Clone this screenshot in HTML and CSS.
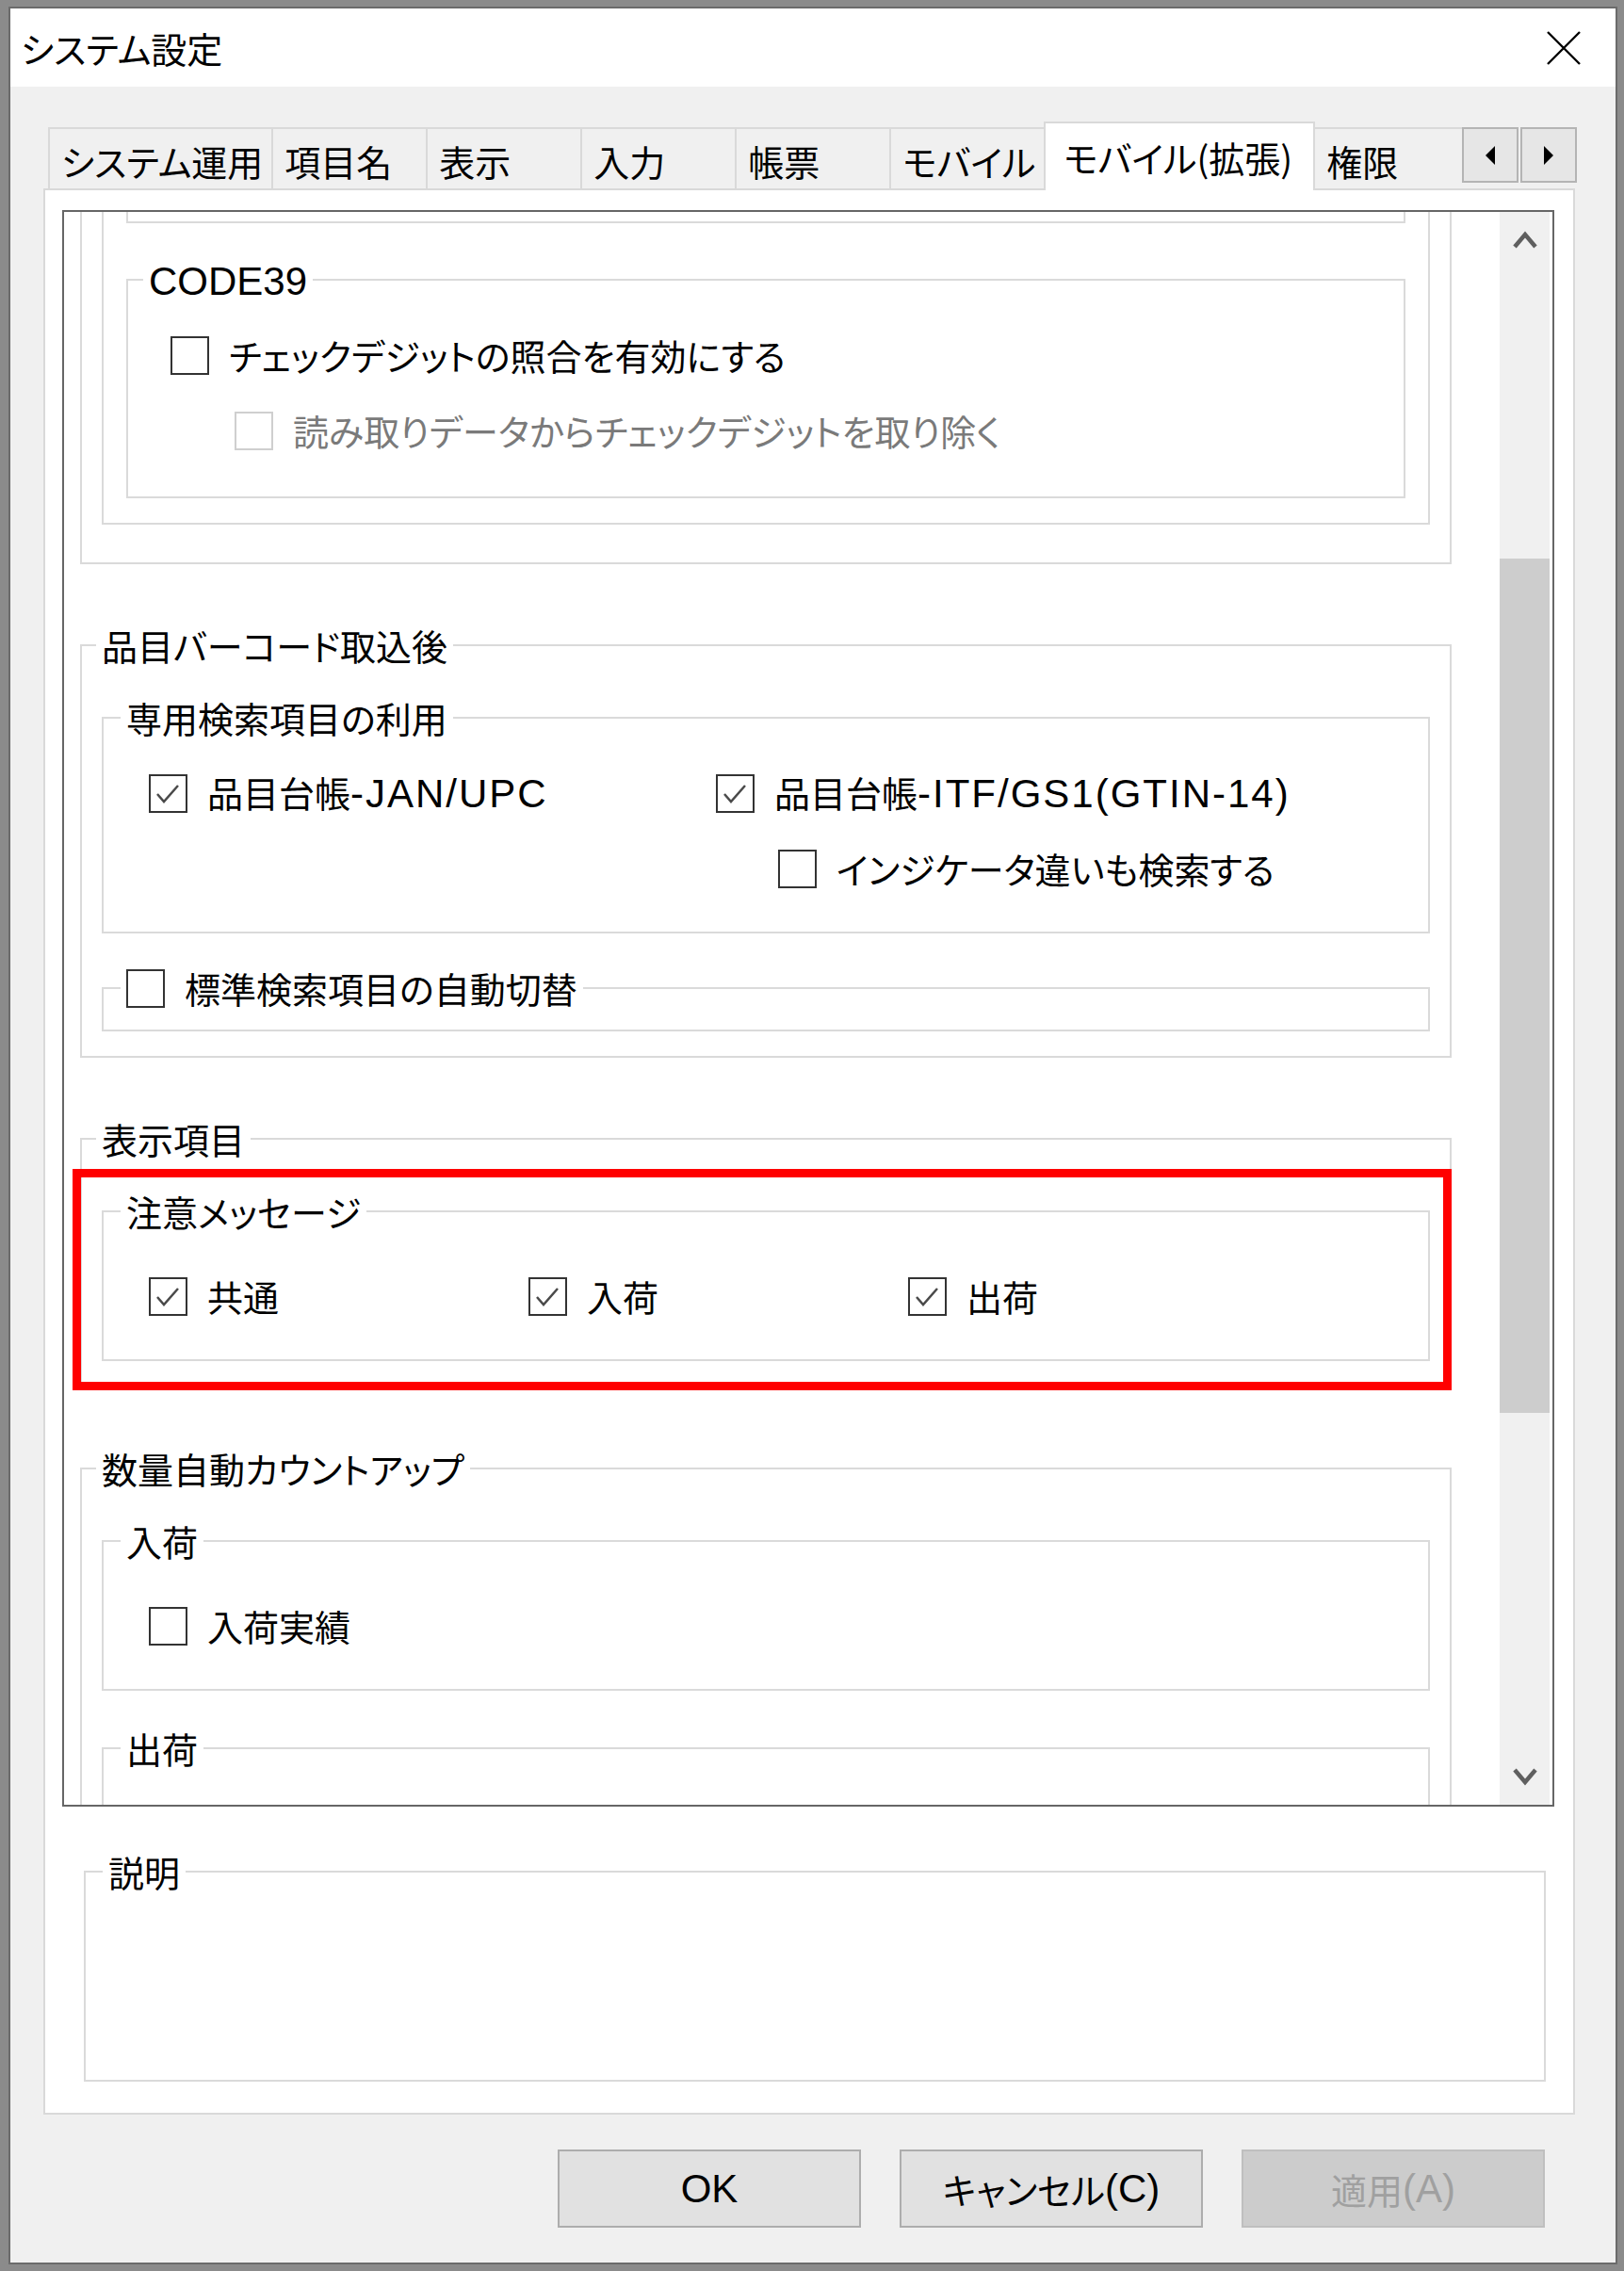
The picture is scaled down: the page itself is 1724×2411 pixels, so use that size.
FILE: index.html
```html
<!DOCTYPE html>
<html lang="ja">
<head>
    <meta charset="UTF-8">
    <title>システム設定</title>
    <link rel="stylesheet" href="styles.css">
</head>
<body>
<div class="window">
    <div class="titlebar">
        <span class="title">システム設定</span>
        <svg class="close" width="38" height="38" viewBox="0 0 38 38"><path d="M2 2 L36 36 M36 2 L2 36"/></svg>
    </div>

    <div class="client">
        <div class="tab-strip">
            <div class="tab-list">
                <div class="tab">システム運用</div>
                <div class="tab">項目名</div>
                <div class="tab">表示</div>
                <div class="tab">入力</div>
                <div class="tab">帳票</div>
                <div class="tab">モバイル</div>
                <div class="tab active">モバイル(拡張)</div>
                <div class="tab">権限</div>
            </div>
            <div class="tab-arrows">
                <span class="arrow-btn"><svg width="12" height="20" viewBox="0 0 12 20"><path d="M11 0 L11 20 L1 10 Z"/></svg></span>
                <span class="arrow-btn"><svg width="12" height="20" viewBox="0 0 12 20"><path d="M1 0 L1 20 L11 10 Z"/></svg></span>
            </div>
        </div>

        <div class="tab-panel">
            <div class="scroll-box">
                <div class="viewport">
                    <div class="scroll-content">

                        <fieldset class="group g1 cut">
                            <fieldset class="group g2 cut">
                                <fieldset class="group g3 prev"></fieldset>
                                <fieldset class="group g3 code39">
                                    <legend><span class="lat">CODE39</span></legend>
                                    <div class="row">
                                        <label class="check"><span class="box"></span><span class="text">チェックデジットの照合を有効にする</span></label>
                                    </div>
                                    <div class="row sub">
                                        <label class="check disabled"><span class="box"></span><span class="text">読み取りデータからチェックデジットを取り除く</span></label>
                                    </div>
                                </fieldset>
                            </fieldset>
                        </fieldset>

                        <fieldset class="group g1">
                            <legend>品目バーコード取込後</legend>
                            <fieldset class="group g2">
                                <legend>専用検索項目の利用</legend>
                                <div class="row split">
                                    <label class="check"><span class="box"><svg viewBox="0 0 37 37"><polyline points="7,19 14,27 29,10"/></svg></span><span class="text">品目台帳<span class="lat">-JAN/UPC</span></span></label>
                                    <label class="check"><span class="box"><svg viewBox="0 0 37 37"><polyline points="7,19 14,27 29,10"/></svg></span><span class="text">品目台帳<span class="lat">-ITF/GS1(GTIN-14)</span></span></label>
                                </div>
                                <div class="row indicator">
                                    <label class="check"><span class="box"></span><span class="text">インジケータ違いも検索する</span></label>
                                </div>
                            </fieldset>
                            <fieldset class="group g2 switch">
                                <legend>
                                    <label class="check"><span class="box"></span><span class="text">標準検索項目の自動切替</span></label>
                                </legend>
                            </fieldset>
                        </fieldset>

                        <fieldset class="group g1">
                            <legend>表示項目</legend>
                            <div class="mark-wrap">
                                <fieldset class="group g2">
                                    <legend>注意メッセージ</legend>
                                    <div class="row loose three">
                                        <label class="check"><span class="box"><svg viewBox="0 0 37 37"><polyline points="7,19 14,27 29,10"/></svg></span><span class="text">共通</span></label>
                                        <label class="check"><span class="box"><svg viewBox="0 0 37 37"><polyline points="7,19 14,27 29,10"/></svg></span><span class="text">入荷</span></label>
                                        <label class="check"><span class="box"><svg viewBox="0 0 37 37"><polyline points="7,19 14,27 29,10"/></svg></span><span class="text">出荷</span></label>
                                    </div>
                                </fieldset>
                                <div class="mark"></div>
                            </div>
                        </fieldset>

                        <fieldset class="group g1">
                            <legend>数量自動カウントアップ</legend>
                            <fieldset class="group g2">
                                <legend>入荷</legend>
                                <div class="row loose">
                                    <label class="check"><span class="box"></span><span class="text">入荷実績</span></label>
                                </div>
                            </fieldset>
                            <fieldset class="group g2 shipping">
                                <legend>出荷</legend>
                                <div class="row loose">
                                    <label class="check"><span class="box"></span><span class="text">出荷実績</span></label>
                                </div>
                            </fieldset>
                        </fieldset>

                    </div>
                </div>
                <div class="vscroll">
                    <div class="sb-btn"><svg width="26" height="20" viewBox="0 0 26 20"><polyline points="2,17 13,4 24,17"/></svg></div>
                    <div class="sb-track"><div class="sb-thumb"></div></div>
                    <div class="sb-btn"><svg width="26" height="20" viewBox="0 0 26 20"><polyline points="2,3 13,16 24,3"/></svg></div>
                </div>
            </div>

            <fieldset class="group desc">
                <legend>説明</legend>
            </fieldset>
        </div>

        <div class="buttons">
            <div class="btn"><span class="lat">OK</span></div>
            <div class="btn">キャンセル<span class="lat">(C)</span></div>
            <div class="btn disabled">適用<span class="lat">(A)</span></div>
        </div>
    </div>
</div>
</body>
</html>
```

FILE: styles.css
```css
* {
    box-sizing: border-box;
}

body {
    margin: 0;
    padding: 7px 7px 7px 9px;
    background-color: #8b8b8b;
    font-family: "Noto Sans CJK JP", sans-serif;
    font-feature-settings: "palt";
    font-size: 38px;
    color: #000;
}

.lat {
    font-family: "Liberation Sans", sans-serif;
    font-size: 42px;
    font-feature-settings: normal;
}

.window {
    height: 2397px;
    border: 2px solid #6b6b6b;
    background-color: #f0f0f0;
    display: flex;
    flex-direction: column;
}

/* title bar */
.titlebar {
    height: 83px;
    background-color: #fff;
    display: flex;
    align-items: center;
    justify-content: space-between;
    padding: 0 36px 0 11px;
}

.close path {
    stroke: #000;
    stroke-width: 2.4;
    fill: none;
}

.client {
    flex: 1;
    padding-top: 37px;
}

/* tabs */
.tab-strip {
    display: flex;
    align-items: flex-end;
    height: 73px;
    margin: 0 41px -2px 40px;
}

.tab-list {
    flex: 1;
    display: flex;
    align-items: flex-end;
    height: 73px;
    overflow: hidden;
}

.tab {
    flex-shrink: 0;
    height: 65px;
    min-width: 164px;
    margin-bottom: 2px;
    padding: 4px 9px 0 12px;
    display: flex;
    align-items: center;
    white-space: nowrap;
    background-color: #f0f0f0;
    border: 2px solid #d9d9d9;
    border-right: none;
    border-bottom: none;
}

.tab.active {
    position: relative;
    z-index: 1;
    height: 73px;
    margin-bottom: 0;
    padding: 0 22px 0 19px;
    background-color: #fff;
    border-right: 2px solid #d9d9d9;
}

.tab.active + .tab {
    border-left: none;
}

.tab-arrows {
    align-self: flex-start;
    margin-top: 6px;
    display: flex;
    gap: 2px;
}

.arrow-btn {
    width: 60px;
    height: 59px;
    display: flex;
    align-items: center;
    justify-content: center;
    background-color: #e6e6e6;
    border: 2px solid #b4b4b4;
}

.arrow-btn path {
    fill: #000;
}

/* tab page */
.tab-panel {
    height: 2045px;
    margin: 0 43px 0 35px;
    background-color: #fff;
    border: 2px solid #d9d9d9;
    padding: 21px 20px 0 18px;
}

.scroll-box {
    height: 1695px;
    border: 2px solid #666;
    display: flex;
}

.viewport {
    flex: 1;
    overflow: hidden;
}

.scroll-content {
    margin-top: -92px;
    padding: 0 51px 0 17px;
}

.vscroll {
    width: 53px;
    margin-right: 3px;
    background-color: #f0f0f0;
    display: flex;
    flex-direction: column;
}

.sb-btn {
    height: 60px;
    display: flex;
    align-items: center;
    justify-content: center;
}

.sb-btn polyline {
    fill: none;
    stroke: #5f5f5f;
    stroke-width: 4.5;
}

.sb-track {
    flex: 1;
}

.sb-thumb {
    margin-top: 308px;
    height: 907px;
    background-color: #cdcdcd;
}

/* group boxes */
.group {
    margin: 0;
    min-width: 0;
    padding: 0;
    border: 2px solid #dadada;
}

.group > legend {
    height: 44px;
    line-height: 44px;
    padding: 0 6px;
    margin-left: -6px;
    white-space: nowrap;
}

.g1 {
    padding: 0 21px 26px;
}

.g1 + .g1 {
    margin-top: 64px;
}

.g2 {
    padding: 0 24px 45px;
    margin-top: 33px;
}

.g3 {
    padding: 0 22px 48px;
}

.g1.cut {
    padding-top: 20px;
    padding-bottom: 40px;
}

.g2.cut {
    margin-top: 0;
    padding-top: 20px;
    padding-bottom: 26px;
}

.g3.prev {
    height: 60px;
    padding: 0;
}

.g3.code39 {
    margin-top: 38px;
}

.g2.switch {
    margin-top: 36px;
    padding-bottom: 22px;
}

.g2.shipping {
    margin-top: 39px;
}

.mark-wrap {
    position: relative;
    margin-top: 33px;
}

.mark-wrap > .g2 {
    margin-top: 0;
}

.mark {
    position: absolute;
    top: -23px;
    right: -23px;
    bottom: -31px;
    left: -31px;
    border: 9px solid #ff0000;
}

/* check boxes */
.row {
    height: 44px;
    margin: 36px 0 0 24px;
}

.g3 .row {
    margin-left: 23px;
}

.g3 .row.sub {
    margin-left: 91px;
}

.row.loose {
    margin-top: 46px;
}

.row.split {
    display: grid;
    grid-template-columns: 602px auto;
}

.row.indicator {
    margin-left: 692px;
}

.row.three {
    display: grid;
    grid-template-columns: repeat(3, 403px);
}

.check {
    height: 44px;
    display: flex;
    align-items: center;
    gap: 21px;
    white-space: nowrap;
}

.box {
    width: 41px;
    height: 41px;
    flex-shrink: 0;
    border: 2px solid #333;
    background-color: #fff;
    display: flex;
}

.box svg {
    width: 37px;
    height: 37px;
}

.box polyline {
    fill: none;
    stroke: #4a4a4a;
    stroke-width: 2.5;
}

.text {
    line-height: 44px;
}

.text .lat {
    letter-spacing: 2px;
}

.check.disabled {
    color: #7a7a7a;
}

.check.disabled .box {
    border-color: #cfcfcf;
}

/* description */
.group.desc {
    height: 245px;
    margin: 47px 9px 0 23px;
    padding: 0 24px;
}

/* dialog buttons */
.buttons {
    display: flex;
    justify-content: flex-end;
    gap: 41px;
    margin: 37px 75px 0 0;
}

.btn {
    width: 322px;
    height: 83px;
    display: flex;
    align-items: center;
    justify-content: center;
    background-color: #e1e1e1;
    border: 2px solid #adadad;
}

.btn.disabled {
    color: #a0a0a0;
    background-color: #cccccc;
    border-color: #bfbfbf;
}
```
